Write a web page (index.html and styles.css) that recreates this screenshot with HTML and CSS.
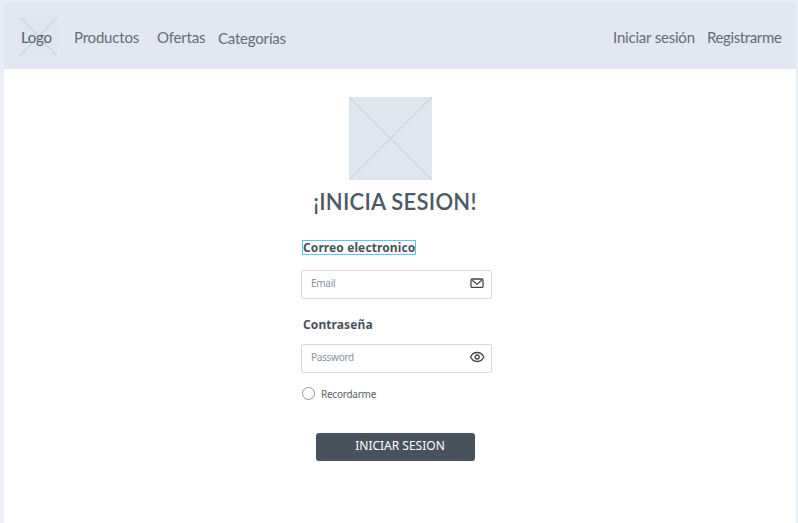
FILE: index.html
```html
<!DOCTYPE html>
<html lang="es">
<head>
<meta charset="utf-8">
<title>Iniciar sesión</title>
<link rel="stylesheet" href="styles.css">
</head>
<body>
<div class="page">
  <header class="navbar">
    <a class="logo">
      <svg class="cross" viewBox="0 0 37 39"><path d="M0 0L37 39M37 0L0 39"/></svg>
      <span class="logo-text">Logo</span>
    </a>
    <nav class="links">
      <a class="products">Productos</a>
      <a class="offers">Ofertas</a>
      <a class="categories">Categorías</a>
    </nav>
    <nav class="account">
      <a class="signin">Iniciar sesión</a>
      <a class="register">Registrarme</a>
    </nav>
  </header>
  <main class="login">
    <svg class="picture" viewBox="0 0 83 83"><path d="M0 0L83 83M83 0L0 83"/></svg>
    <h1>¡INICIA SESION!</h1>
    <form class="form">
      <label class="label selected">Correo electronico</label>
      <div class="field email">
        <span class="placeholder">Email</span>
        <svg class="icon" viewBox="0 0 16 16"><rect x="2" y="4" width="12" height="8.4" rx="1.2"/><path d="M3.2 5.2L8 9.2L12.8 5.2"/></svg>
      </div>
      <label class="label pass-label">Contraseña</label>
      <div class="field password">
        <span class="placeholder">Password</span>
        <svg class="icon" viewBox="0 0 16 16"><path d="M1.6 8C4.2 2 12.2 2 14.8 8C12.2 14 4.2 14 1.6 8Z"/><circle cx="8.2" cy="8" r="2"/></svg>
      </div>
      <div class="remember"><span class="radio"></span><span class="remember-text">Recordarme</span></div>
      <div class="submit"><span class="submit-text">INICIAR SESION</span></div>
    </form>
  </main>
</div>
</body>
</html>
```

FILE: styles.css
```css
* { box-sizing: border-box; }
body {
  margin: 0;
  height: 523px;
  overflow: hidden;
  background: #e9edf6;
  color: #48525e;
  font-family: "Noto Sans", "Open Sans", sans-serif;
}
.page {
  height: 523px;
  margin: 0 2px 0 4px;
  padding-top: 2px;
}
.navbar {
  display: flex;
  height: 67px;
  padding: 15px 14px 0 16px;
  background: #e3e7f1;
  border-radius: 3px 3px 0 0;
  color: #626d79;
  font: 15px/20px Lato, sans-serif;
  letter-spacing: -0.2px;
  white-space: nowrap;
}
.logo {
  display: grid;
  width: 37px;
  height: 39px;
  background: #dfe6ee;
}
.cross, .logo-text { grid-area: 1 / 1; }
.cross { width: 37px; height: 39px; }
.cross path, .picture path { fill: none; stroke: #cdd5e0; stroke-width: 1.3; }
.logo-text { padding: 10px 0 0 1px; color: #56616d; letter-spacing: -0.3px; }
.links, .account { display: flex; padding-top: 10px; }
.links { margin-left: 17px; }
.products { width: 83px; }
.offers { width: 61px; }
.categories { padding-top: 1px; }
.account { margin-left: auto; }
.signin { width: 94px; }
.register { width: 75px; letter-spacing: -0.38px; }
.login {
  display: flex;
  flex-direction: column;
  align-items: center;
  height: 454px;
  padding: 28px 7px 0 0;
  background: #fff;
}
.picture { width: 83px; height: 83px; margin-right: 12px; background: #dfe6ee; }
h1 {
  margin: 8px 0 0;
  padding-right: 3px;
  font: 600 22px/28px Lato, sans-serif;
  color: #4d5966;
  letter-spacing: 0.25px;
  white-space: nowrap;
}
.form {
  display: flex;
  flex-direction: column;
  align-items: flex-start;
  width: 191px;
  margin-top: 25px;
}
.label {
  height: 13px;
  margin-left: 2px;
  color: #48525e;
  font-size: 12px;
  font-weight: 700;
  line-height: 13px;
  letter-spacing: 0.1px;
  white-space: nowrap;
}
.selected { box-shadow: 0 0 0 1px #5bc4fa; }
.field {
  display: flex;
  align-items: center;
  justify-content: space-between;
  width: 191px;
  height: 29px;
  padding: 0 6px 3px 9px;
  border: 1px solid #d6dce4;
  border-radius: 2px;
}
.email { margin: 16px 0 19px; }
.password { margin-top: 13px; }
.placeholder { color: #8792a4; font-size: 10px; letter-spacing: -0.28px; }
.icon { width: 16px; height: 16px; fill: none; stroke: #454545; stroke-width: 1.3; }
.remember { display: flex; align-items: center; margin: 13px 0 0 1px; height: 15px; }
.radio { width: 13px; height: 13px; border: 1px solid #8b95a7; border-radius: 50%; }
.remember-text { margin-left: 6px; color: #59636e; font-size: 10px; letter-spacing: -0.25px; }
.submit {
  width: 159px;
  height: 28px;
  margin: 32px 0 0 15px;
  background: #48525d;
  border-radius: 3px;
  color: #fff;
  font-size: 12px;
  line-height: 25px;
  text-align: center;
}
.submit-text { margin-left: 9px; }
```
